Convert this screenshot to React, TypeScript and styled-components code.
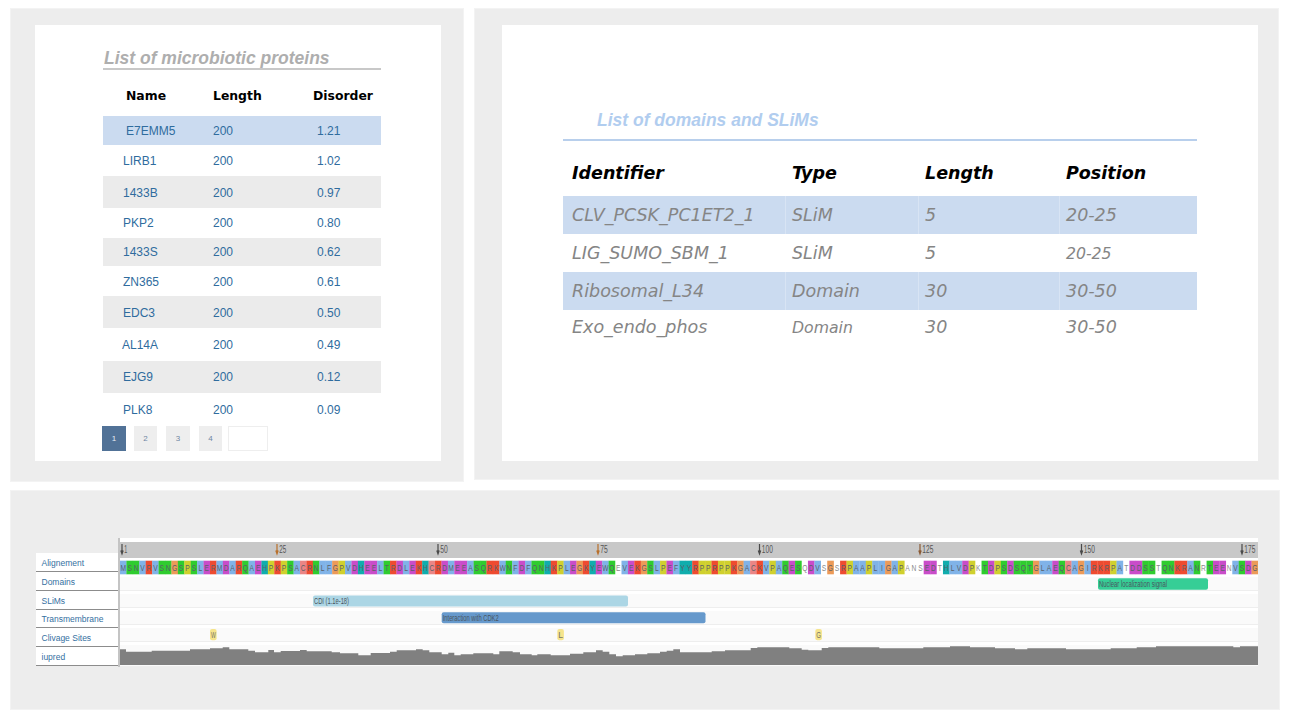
import React from "react";
import styled, { createGlobalStyle } from "styled-components";

const Global = createGlobalStyle`
  html, body { margin: 0; padding: 0; background: #fff; }
  body { font-family: "Liberation Sans", Arial, sans-serif; }
`;

const Page = styled.div`
  width: 1289px;
  height: 720px;
  overflow: hidden;
  box-sizing: border-box;
  padding: 8px 9px 0 10px;
`;
const TopRow = styled.div`
  display: flex;
  align-items: flex-start;
  gap: 10px;
`;
const Panel = styled.section<{ $w: number; $h: number }>`
  box-sizing: border-box;
  width: ${(p) => p.$w}px;
  height: ${(p) => p.$h}px;
  background: #ededed;
  box-shadow: inset 0 0 0 1px #f3f3f3;
`;
const LeftPanel = styled(Panel)`
  padding: 17px 23px 0 25px;
`;
const RightPanel = styled(Panel)`
  padding: 17px 21px 0 28px;
`;
const BottomPanel = styled(Panel)`
  margin-top: 8px;
  padding: 48px 0 0 26px;
`;
const Card = styled.div<{ $h: number }>`
  height: ${(p) => p.$h}px;
  background: #fff;
  box-sizing: border-box;
`;
const ProteinCard = styled(Card)`
  padding: 21px 60px 0 68px;
`;
const DomainCard = styled(Card)`
  padding: 83px 61px 0 61px;
`;
const ProteinTitle = styled.h2`
  margin: 0;
  box-sizing: content-box;
  padding: 1px 0 0 1px;
  height: 21px;
  line-height: 22px;
  font-size: 17.5px;
  font-weight: bold;
  font-style: italic;
  color: #aeaeae;
  border-bottom: 2px solid #c8c8c8;
`;
const DomainTitle = styled.h2`
  margin: 0;
  padding: 1px 0 8px 34px;
  height: 22px;
  line-height: 22px;
  font-size: 17.5px;
  font-weight: bold;
  font-style: italic;
  color: #b1cdef;
  border-bottom: 2px solid #b8cfec;
`;
const ProteinGrid = styled.div`
  display: grid;
  grid-template-columns: 110px 100px 68px;
`;
const ProteinHead = styled.div`
  grid-column: 1 / -1;
  display: grid;
  grid-template-columns: inherit;
  box-sizing: border-box;
  height: 46px;
  padding-top: 4px;
  align-items: center;
  font-family: "DejaVu Sans", sans-serif;
  font-size: 12.4px;
  font-weight: bold;
  color: #000;
`;
const HeadName = styled.span<{ $pad: number }>`
  padding-left: ${(p) => p.$pad}px;
  white-space: nowrap;
`;
const ProteinRow = styled.div<{ $h: number; $bg: string; $nudge: number }>`
  grid-column: 1 / -1;
  display: grid;
  grid-template-columns: inherit;
  box-sizing: border-box;
  height: ${(p) => p.$h}px;
  padding-top: ${(p) => p.$nudge}px;
  align-items: center;
  background: ${(p) => p.$bg};
  color: #2f6c9e;
`;
const ProteinCell = styled.span<{ $pad: number }>`
  padding-left: ${(p) => p.$pad}px;
  font-size: 12px;
`;
const Pager = styled.nav`
  display: flex;
  margin-left: -1px;
  height: 25px;
`;
const PageButton = styled.span<{ $w: number; $gap: number; $active?: boolean }>`
  display: flex;
  align-items: center;
  justify-content: center;
  width: ${(p) => p.$w}px;
  margin-right: ${(p) => p.$gap}px;
  background: ${(p) => (p.$active ? "#517297" : "#eeeeee")};
  color: ${(p) => (p.$active ? "#e8edf3" : "#6f86a3")};
  font-size: 8px;
`;
const PageBlank = styled.span`
  box-sizing: border-box;
  width: 40px;
  border: 1px solid #eeeeee;
`;
const DomainHead = styled.div`
  display: grid;
  grid-template-columns: 223px 133px 141px 137px;
  box-sizing: border-box;
  height: 55px;
  padding-top: 8px;
  align-items: center;
  font-family: "DejaVu Sans", sans-serif;
  font-size: 17.5px;
  font-weight: bold;
  font-style: italic;
  color: #000;
`;
const HeadCell = styled.span<{ $pad: number }>`
  padding-left: ${(p) => p.$pad}px;
`;
const DomainRow = styled.div<{ $h: number; $on: boolean }>`
  display: grid;
  grid-template-columns: 223px 133px 141px 137px;
  height: ${(p) => p.$h}px;
  background: ${(p) => (p.$on ? "#cbdbf0" : "#fff")};
  font-family: "DejaVu Sans", sans-serif;
  font-style: italic;
  color: #858585;
`;
const DomainCell = styled.span<{ $size?: number; $on: boolean; $pad: number }>`
  display: flex;
  align-items: center;
  padding-left: ${(p) => p.$pad}px;
  font-size: ${(p) => p.$size ?? 17.5}px;
  white-space: nowrap;
  border-left: ${(p) => (p.$on ? "1px solid #d8e4f4" : "0")};
  margin-left: ${(p) => (p.$on ? "-1px" : "0")};
`;
const ChartRow = styled.div`
  display: flex;
  align-items: flex-start;
`;
const Labels = styled.ul`
  list-style: none;
  margin: 15px 0 0;
  padding: 0;
  width: 82px;
  flex: none;
  background: #fff;
`;
const LabelItem = styled.li<{ $h: number }>`
  box-sizing: border-box;
  height: ${(p) => p.$h}px;
  line-height: ${(p) => p.$h + 1}px;
  padding-left: 5.5px;
  border-bottom: 1px solid #8c8c8c;
  font-size: 8.5px;
  color: #34709f;
`;
const Chart = styled.svg`
  display: block;
  flex: none;
`;
const SeqLetter = styled.text<{ $on: boolean }>`
  font-family: "Liberation Sans", sans-serif;
  font-size: 9.3px;
  fill: ${(p) => (p.$on ? "#5a6068" : "#8a8a8a")};
  text-anchor: middle;
`;
const TickText = styled.text`
  font-family: "Liberation Sans", sans-serif;
  font-size: 11px;
  fill: #555;
`;
const FeatureText = styled.text`
  font-family: "Liberation Sans", sans-serif;
  font-size: 9px;
  fill: #4a5560;
`;
const SiteText = styled.text`
  font-family: "Liberation Sans", sans-serif;
  font-size: 8.5px;
  fill: #77766a;
`;

const proteins: [string, number, string, number, string, number][] = [
  ["E7EMM5", 23, "1.21", 29, "#cbdbf0", 0],
  ["LIRB1", 20, "1.02", 31, "#fff", 0],
  ["1433B", 20, "0.97", 32, "#ebebeb", 1],
  ["PKP2", 20, "0.80", 30, "#fff", 0],
  ["1433S", 20, "0.62", 28, "#ebebeb", 0],
  ["ZN365", 20, "0.61", 30, "#fff", 1],
  ["EDC3", 20, "0.50", 32, "#ebebeb", 1],
  ["AL14A", 19, "0.49", 33, "#fff", 0],
  ["EJG9", 20, "0.12", 32, "#ebebeb", 0],
  ["PLK8", 20, "0.09", 33, "#fff", 0],
];

const domains: { cells: [string, string, string, string]; h: number; on: boolean; sizes?: number[] }[] = [
  { cells: ["CLV_PCSK_PC1ET2_1", "SLiM", "5", "20-25"], h: 38, on: true },
  { cells: ["LIG_SUMO_SBM_1", "SLiM", "5", "20-25"], h: 38, on: false, sizes: [17.5, 17.5, 17.5, 15.7] },
  { cells: ["Ribosomal_L34", "Domain", "30", "30-50"], h: 38, on: true },
  { cells: ["Exo_endo_phos", "Domain", "30", "30-50"], h: 34, on: false, sizes: [17.5, 15.7, 17.5, 17.5] },
];

const labels: [string, number][] = [
  ["Alignement", 19],
  ["Domains", 19],
  ["SLiMs", 19],
  ["Transmembrane", 18],
  ["Clivage Sites", 19],
  ["iupred", 19],
];

const SEQ =
  "MSNVRVSNGSPSLERMDARQAEHPKPSACRNLFGPVDHEELTRDLEKHCRDMEEASQRKWNFDFQNHKPLEGKYEWQeVEKGSLPEFYYRPPRPPKGACKVPAQESqDVsGsRPAAPLIGAPansEDtHLVDPkTDPSDSQTGLAEQCAGIRKRPAtDDSStQNKRANrTEEnVSDG";

const residueColor: Record<string, string> = {
  A: "#80b3e8", I: "#80b3e8", L: "#80b3e8", M: "#80b3e8", F: "#80b3e8", W: "#80b3e8", V: "#80b3e8",
  K: "#ee4b30", R: "#ee4b30",
  E: "#c94cc9", D: "#c94cc9",
  N: "#2fcc2f", Q: "#2fcc2f", S: "#2fcc2f", T: "#2fcc2f",
  C: "#ea8585",
  G: "#ec9a58",
  P: "#d0d02e",
  H: "#10adad", Y: "#10adad",
};

// Chart coordinates: the svg starts at page x=118, y=538.
const X0 = 118;
const Y0 = 538;
const cellW = (1258 - 120) / SEQ.length;

const ticks: [string, number, number, string][] = [
  ["1", 122, 3, "#4a4a4a"],
  ["25", 277, 7, "#b8702c"],
  ["50", 438, 7.5, "#4a4a4a"],
  ["75", 598, 7.5, "#b8702c"],
  ["100", 759.5, 11, "#4a4a4a"],
  ["125", 920, 11, "#8a5a35"],
  ["150", 1081.5, 11, "#4a4a4a"],
  ["175", 1242, 11, "#4a4a4a"],
];

const tracks: [number, number][] = [
  [577, 590],
  [594, 607],
  [611, 624],
  [628, 641],
  [645, 666],
];

const features: { x0: number; x1: number; y0: number; y1: number; fill: string; text: string; tw: number }[] = [
  { x0: 313, x1: 628, y0: 595.5, y1: 606.5, fill: "#acd6e5", text: "CDI (1.1e-18)", tw: 35 },
  { x0: 441.7, x1: 705.5, y0: 612.3, y1: 623.2, fill: "#6699cc", text: "Interaction with CDK2", tw: 56 },
  { x0: 1098, x1: 1208, y0: 578.3, y1: 589.7, fill: "#36ce96", text: "Nuclear localization signal", tw: 68 },
];

const sites: [string, number][] = [
  ["W", 210],
  ["L", 557.3],
  ["G", 815.3],
];

// iupred profile, read from the picture: per segment, a left x and steps of [top, right edge], at 3x.
const profileSegments: [number, [number, number][]][] = [
  [20, [[343, 318], [350, 395], [347, 510], [343, 570], [340, 608], [337, 628], [343, 685], [347, 705], [352, 745], [345, 762], [352, 782], [348, 840], [345, 860], [349, 935], [352, 960]]],
  [340, [[355, 55], [361, 92], [354, 150], [350, 170], [346, 228], [343, 248], [346, 268], [352, 305], [358, 325], [353, 343], [361, 362], [358, 400], [355, 460], [358, 478], [349, 518], [352, 540], [358, 575], [361, 592], [358, 632], [361, 690], [356, 730], [352, 768], [346, 788], [350, 808], [358, 828], [364, 848], [361, 885], [358, 922], [355, 960]]],
  [660, [[350, 20], [347, 40], [343, 60], [352, 155], [349, 195], [346, 272], [339, 292], [337, 388], [340, 425], [344, 445], [346, 485], [339, 505], [337, 658], [340, 790], [337, 870], [334, 930], [337, 960]]],
  [970, [[337, 75], [340, 135], [343, 172], [340, 288], [343, 422], [340, 500], [337, 558], [334, 790], [337, 810], [334, 864]]],
];

function profilePoints(): string {
  const pts: string[] = [`${120 - X0},${665 - Y0}`];
  let prev = 120;
  for (const [base, steps] of profileSegments) {
    for (const [top, right] of steps) {
      const y = 535 + top / 3 - Y0;
      const x = base + right / 3 - X0;
      const startX = Math.max(prev, 120) - X0;
      if (x <= startX) continue;
      pts.push(`${startX.toFixed(1)},${y.toFixed(1)}`, `${x.toFixed(1)},${y.toFixed(1)}`);
      prev = x + X0;
    }
  }
  pts.push(`${1258 - X0},${665 - Y0}`);
  return pts.join(" ");
}

function FeatureViewer() {
  const seqTop = 560.7 - Y0;
  return (
    <Chart width={1140} height={129} viewBox="0 0 1140 129" role="img" aria-label="Sequence feature viewer">
      <rect x={0} y={0} width={1140} height={129} fill="#fff" />
      <rect x={2} y={542 - Y0} width={1138} height={16} fill="#c8c8c8" />
      {ticks.map(([t, x, w, c]) => (
        <g key={t}>
          <path
            d={`M${x - X0} ${544 - Y0}V${553 - Y0}M${x - X0 - 1.2} ${550.5 - Y0}L${x - X0} ${554 - Y0}L${x - X0 + 1.2} ${550.5 - Y0}`}
            stroke={c}
            strokeWidth={1.2}
            fill="none"
          />
          <TickText x={x - X0 + 2.3} y={553 - Y0} textLength={w} lengthAdjust="spacingAndGlyphs">
            {t}
          </TickText>
        </g>
      ))}
      {tracks.map(([a, b]) => (
        <g key={a}>
          <rect x={2} y={a - Y0} width={1138} height={b - a} fill="#fafafa" />
          <rect x={2} y={b - Y0} width={1138} height={1} fill="#eeeeee" />
        </g>
      ))}
      {SEQ.split("").map((ch, i) => {
        const up = ch.toUpperCase();
        const colored = ch === up;
        const x = 2 + i * cellW;
        return (
          <g key={i}>
            {colored && <rect x={x} y={seqTop} width={cellW + 0.2} height={13.6} fill={residueColor[up]} />}
            <g transform={`translate(${(x + cellW / 2).toFixed(2)} ${(seqTop + 10.3).toFixed(2)}) scale(0.72 1)`}>
              <SeqLetter $on={colored}>{up}</SeqLetter>
            </g>
          </g>
        );
      })}
      {features.map((f) => (
        <g key={f.text}>
          <rect x={f.x0 - X0} y={f.y0 - Y0} width={f.x1 - f.x0} height={f.y1 - f.y0} rx={2} fill={f.fill} />
          <FeatureText x={f.x0 - X0 + 1} y={(f.y0 + f.y1) / 2 + 3.2 - Y0} textLength={f.tw} lengthAdjust="spacingAndGlyphs">
            {f.text}
          </FeatureText>
        </g>
      ))}
      {sites.map(([s, x]) => (
        <g key={s}>
          <rect x={x - X0} y={629 - Y0} width={6.6} height={11.3} rx={2} fill="#f5e48c" />
          <SiteText x={x - X0 + 0.9} y={638 - Y0} textLength={4.8} lengthAdjust="spacingAndGlyphs">
            {s}
          </SiteText>
        </g>
      ))}
      <polygon points={profilePoints()} fill="#808080" />
      <rect x={0} y={0} width={2} height={129} fill="#c4c4c4" />
    </Chart>
  );
}

export default function App() {
  return (
    <Page>
      <Global />
      <TopRow>
        <LeftPanel $w={454} $h={474}>
          <ProteinCard $h={436}>
            <ProteinTitle>List of microbiotic proteins</ProteinTitle>
            <ProteinGrid>
              <ProteinHead>
                <HeadName $pad={23}>Name</HeadName>
                <HeadName $pad={0}>Length</HeadName>
                <HeadName $pad={0}>Disorder</HeadName>
              </ProteinHead>
              {proteins.map(([name, pad, dis, h, bg, nudge]) => (
                <ProteinRow key={name} $h={h} $bg={bg} $nudge={nudge}>
                  <ProteinCell $pad={pad}>{name}</ProteinCell>
                  <ProteinCell $pad={0}>200</ProteinCell>
                  <ProteinCell $pad={4}>{dis}</ProteinCell>
                </ProteinRow>
              ))}
            </ProteinGrid>
            <Pager>
              <PageButton $w={24} $gap={8} $active>1</PageButton>
              <PageButton $w={23} $gap={9}>2</PageButton>
              <PageButton $w={24} $gap={9}>3</PageButton>
              <PageButton $w={23} $gap={6}>4</PageButton>
              <PageBlank />
            </Pager>
          </ProteinCard>
        </LeftPanel>
        <RightPanel $w={805} $h={472}>
          <DomainCard $h={436}>
            <DomainTitle>List of domains and SLiMs</DomainTitle>
            <DomainHead>
              <HeadCell $pad={9}>Identifier</HeadCell>
              <HeadCell $pad={6}>Type</HeadCell>
              <HeadCell $pad={6}>Length</HeadCell>
              <HeadCell $pad={6}>Position</HeadCell>
            </DomainHead>
            {domains.map((d) => (
              <DomainRow key={d.cells[0]} $h={d.h} $on={d.on}>
                {d.cells.map((c, i) => (
                  <DomainCell key={i} $on={d.on && i > 0} $pad={i === 0 ? 9 : 6} $size={d.sizes?.[i]}>
                    {c}
                  </DomainCell>
                ))}
              </DomainRow>
            ))}
          </DomainCard>
        </RightPanel>
      </TopRow>
      <BottomPanel $w={1270} $h={220}>
        <ChartRow>
          <Labels>
            {labels.map(([l, h]) => (
              <LabelItem key={l} $h={h}>
                {l}
              </LabelItem>
            ))}
          </Labels>
          <FeatureViewer />
        </ChartRow>
      </BottomPanel>
    </Page>
  );
}
